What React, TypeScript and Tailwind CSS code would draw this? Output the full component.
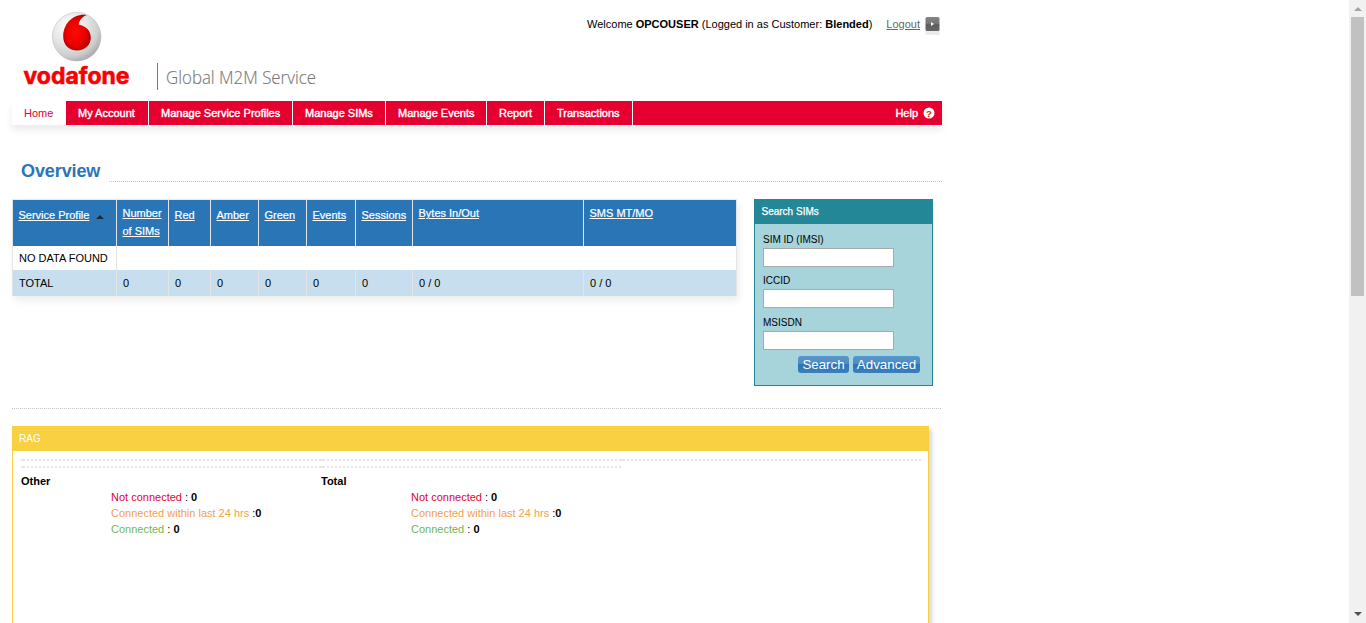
import React from 'react';

const NAV = [
  { label: 'My Account', cls: 'w-[83px]' },
  { label: 'Manage Service Profiles', cls: 'w-[144px]' },
  { label: 'Manage SIMs', cls: 'w-[93px]' },
  { label: 'Manage Events', cls: 'w-[101px]' },
  { label: 'Report', cls: 'w-[58px]' },
  { label: 'Transactions', cls: 'w-[88px]' },
];

const COLUMNS = [
  { label: 'Red', total: '0', pad: 'pt-[6px]' },
  { label: 'Amber', total: '0', pad: 'pt-[6px]' },
  { label: 'Green', total: '0', pad: 'pt-[6px]' },
  { label: 'Events', total: '0', pad: 'pt-[6px]' },
  { label: 'Sessions', total: '0', pad: 'pt-[6px]' },
  { label: 'Bytes In/Out', total: '0 / 0', pad: 'pt-[4px]' },
  { label: 'SMS MT/MO', total: '0 / 0', pad: 'pt-[4px]' },
];

const GRID = 'grid grid-cols-[104px_52px_42px_48px_48px_49px_57px_171px_153px]';
const DOTS = 'bg-[repeating-linear-gradient(90deg,#c4c4c4_0,#c4c4c4_1px,transparent_1px,transparent_2px)]';

function Logo() {
  return (
    <svg width="320" height="92" viewBox="0 0 320 92" className="block">
      <defs>
        <radialGradient id="ball" cx="0.35" cy="0.3" r="0.8">
          <stop offset="0" stopColor="#ffffff" />
          <stop offset="0.45" stopColor="#e6e6e6" />
          <stop offset="0.75" stopColor="#cdcdcd" />
          <stop offset="1" stopColor="#9c9c9c" />
        </radialGradient>
        <radialGradient id="drop" cx="0.45" cy="0.5" r="0.6">
          <stop offset="0" stopColor="#ff0a04" />
          <stop offset="0.6" stopColor="#ea0000" />
          <stop offset="1" stopColor="#a00000" />
        </radialGradient>
      </defs>
      <circle cx="64.7" cy="36.7" r="24.3" fill="url(#ball)" stroke="#b4b4b4" strokeWidth="0.5" />
      <path
        d="M74.6 14.9 C60 13.6 51.2 24.5 51.2 36.5 C51.2 45 57 50.5 65 50.5 C73 50.5 78.8 45 78.8 37.8 C78.8 30.8 74 26.2 66.6 24.6 C67.2 20.5 70 16.9 74.6 14.9 Z"
        fill="url(#drop)"
      />
      <text x="11.5" y="83.7" textLength="106" lengthAdjust="spacingAndGlyphs" fill="#fa0000" stroke="#fa0000" strokeWidth="0.6" fontSize="23.5" fontWeight="700" fontFamily="Inter, sans-serif">
        vodafone
      </text>
      <rect x="145" y="63" width="1" height="27" fill="#777" />
      <text x="154" y="84" textLength="150" lengthAdjust="spacingAndGlyphs" fill="#777" stroke="#777" strokeWidth="0.15" fontSize="18" fontWeight="300" fontFamily="'Open Sans', sans-serif">
        Global M2M Service
      </text>
    </svg>
  );
}

function Field({ label, cls }: { label: string; cls: string }) {
  return (
    <label className={`flex flex-col ${cls}`}>
      <span className="h-4 text-[10px] leading-4">{label}</span>
      <input className="h-[19px] w-[131px] border border-[#a9a9a9] bg-white" />
    </label>
  );
}

function BlueButton({ children, cls }: { children: string; cls: string }) {
  return (
    <button
      className={`h-[17px] rounded-[3px] bg-[linear-gradient(#5795ca_0,#4c8dc5_50%,#2d75b5_50%,#3b80bb_100%)] text-center text-[13.33px] leading-[17px] whitespace-nowrap text-white ${cls}`}
    >
      {children}
    </button>
  );
}

function Status({ title }: { title: string }) {
  return (
    <div className="w-[300px] leading-4">
      <div className="font-bold">{title}</div>
      <div className="pl-[90px]">
        <div><span className="text-[#e60032]">Not connected</span> : <b>0</b></div>
        <div><span className="text-[#f5a04a]">Connected within last 24 hrs</span> :<b>0</b></div>
        <div><span className="text-[#74b653]">Connected</span> : <b>0</b></div>
      </div>
    </div>
  );
}

function DottedRow({ segments }: { segments: number }) {
  return (
    <div className="flex h-[2px]">
      {Array.from({ length: segments }, (_, i) => (
        <div key={i} className="flex h-[2px] w-[300px]">
          <div className="w-[2px] bg-[#e6e6e6]" />
          <div className="flex-1 bg-[repeating-linear-gradient(90deg,#e6e6e6_0,#e6e6e6_2px,transparent_2px,transparent_4px)]" />
        </div>
      ))}
    </div>
  );
}

export default function App() {
  return (
    <div className="flex h-[623px] w-full overflow-hidden bg-white font-['Liberation_Sans',Arial,sans-serif] text-[11px] text-black">
      <main className="min-w-0 flex-1 pl-3">
        <div className="w-[930px]">
          <header className="flex h-[101px] justify-between">
            <Logo />
            <div className="flex items-start pt-[17px] pr-[2px]">
              <div className="leading-[15px]">
                Welcome <b>OPCOUSER</b> (Logged in as Customer: <b>Blended</b>)
              </div>
              <a className="ml-[14px] leading-[15px] text-[#666] underline">Logout</a>
              <svg width="15" height="19" className="ml-[5px]">
                <defs>
                  <linearGradient id="go" x1="0" x2="0" y1="0" y2="1">
                    <stop offset="0" stopColor="#858585" />
                    <stop offset="0.5" stopColor="#747474" />
                    <stop offset="0.55" stopColor="#5c5c5c" />
                    <stop offset="1" stopColor="#686868" />
                  </linearGradient>
                </defs>
                <rect x="0.5" y="13" width="14" height="5" fill="#ececec" />
                <rect x="0.5" y="0" width="14" height="14" rx="1.5" fill="url(#go)" />
                <path d="M6 5 L9 7 L6 9 Z" fill="#fff" />
              </svg>
            </div>
          </header>

          <nav className="flex h-6 bg-[#e60030] leading-6 text-white shadow-[0_5px_7px_rgba(0,0,0,0.08)]">
            <a className="w-[54px] bg-white pl-3 text-[#e60030]">Home</a>
            {NAV.map((n) => (
              <a
                key={n.label}
                className={`border-r border-white pl-3 whitespace-nowrap [-webkit-text-stroke:0.4px_#fff] ${n.cls}`}
              >
                {n.label}
              </a>
            ))}
            <a className="ml-auto flex items-center pr-[7px] [-webkit-text-stroke:0.4px_#fff]">
              Help
              <svg width="12" height="12" className="ml-[5px] [-webkit-text-stroke:0]">
                <circle cx="6" cy="6" r="5.5" fill="#fff" />
                <text x="6" y="9.5" textAnchor="middle" fontSize="9.5" fontWeight="700" fill="#e62000">?</text>
              </svg>
            </a>
          </nav>

          <div className="mt-[35px] flex h-[22px] items-end">
            <h1 className="w-[97px] pl-[9px] text-[18px] leading-[22px] font-bold tracking-[-0.1px] text-[#2a75b6]">Overview</h1>
            <div className={`h-px flex-1 ${DOTS}`} />
          </div>

          <div className="mt-[17px] flex h-[187px] items-start justify-between pr-[9px]">
            <div className="w-[725px] border border-[#e4e4e4] border-t-[#e8e8e8] shadow-[2px_5px_7px_rgba(0,0,0,0.07)]">
              <div className={`-ml-px h-[46px] [-webkit-text-stroke:0.2px_#fff] ${GRID}`}>
                <div className="flex border-l border-[#e4e4e4] bg-[#2a75b6] pt-[6px] pl-[5.5px] leading-[18px] text-white">
                  <span className="underline">Service Profile</span>
                  <svg width="8" height="4" className="mt-[9px] ml-[7px]"><path d="M0 4 L4 0 L8 4 Z" fill="#222b33" /></svg>
                </div>
                <div className="border-l border-[#e4e4e4] bg-[#2a75b6] pt-[4px] pl-[5.5px] leading-[18px] text-white underline">
                  Number<br />of SIMs
                </div>
                {COLUMNS.map((c) => (
                  <div key={c.label} className={`border-l border-[#e4e4e4] bg-[#2a75b6] pl-[5.5px] leading-[18px] text-white underline ${c.pad}`}>
                    {c.label}
                  </div>
                ))}
              </div>
              <div className="flex h-6 bg-white">
                <div className="w-[104px] border-r border-[#e4e4e4] pl-[6px] leading-6 whitespace-nowrap">NO DATA FOUND</div>
              </div>
              <div className={`-ml-px h-[25px] leading-[26px] ${GRID}`}>
                <div className="border-l border-[#e4e4e4] bg-[#c7deee] pl-[6px]">TOTAL</div>
                <div className="border-l border-[#e4e4e4] bg-[#c7deee] pl-[6px]">0</div>
                {COLUMNS.map((c) => (
                  <div key={c.label} className="border-l border-[#e4e4e4] bg-[#c7deee] pl-[6px]">{c.total}</div>
                ))}
              </div>
            </div>

            <section className="h-[187px] w-[179px] border border-[#248797] bg-[#a7d3da]">
              <h2 className="h-6 bg-[#248797] pl-[6.5px] text-[10px] leading-6 font-normal text-white [-webkit-text-stroke:0.25px_#fff]">Search SIMs</h2>
              <div className="pt-2 pl-2">
                <Field label="SIM ID (IMSI)" cls="h-[35px]" />
                <Field label="ICCID" cls="mt-[6px] h-[35px]" />
                <Field label="MSISDN" cls="mt-[7px] h-[35px]" />
              </div>
              <div className="mt-[6px] flex gap-1 pl-[43px]">
                <BlueButton cls="w-[51px]">Search</BlueButton>
                <BlueButton cls="w-[67px]">Advanced</BlueButton>
              </div>
            </section>
          </div>

          <div className={`mt-[22px] h-px ${DOTS}`} />

          <section className="mt-[17px] h-[300px] w-[917px] border border-[#f9d042] bg-white shadow-[3px_3px_4px_rgba(0,0,0,0.16)]">
            <h2 className="h-6 bg-[#f9d042] pl-[6px] text-[10px] leading-6 text-white">RAG</h2>
            <div className="flex flex-col gap-[5px] pt-2 pl-2">
              <DottedRow segments={3} />
              <DottedRow segments={2} />
              <div className="flex">
                <Status title="Other" />
                <Status title="Total" />
              </div>
            </div>
          </section>
        </div>
      </main>

      <aside className="flex w-[17px] flex-col items-center bg-[#f1f1f1]">
        <div className="flex h-[17px] items-center"><svg width="8" height="4"><path d="M0 4 L4 0 L8 4 Z" fill="#a3a3a3" /></svg></div>
        <div className="h-[279px] w-[13px] bg-[#c1c1c1]" />
        <div className="mt-auto flex h-[18px] items-center"><svg width="8" height="4"><path d="M0 0 L8 0 L4 4 Z" fill="#505050" /></svg></div>
      </aside>
    </div>
  );
}
